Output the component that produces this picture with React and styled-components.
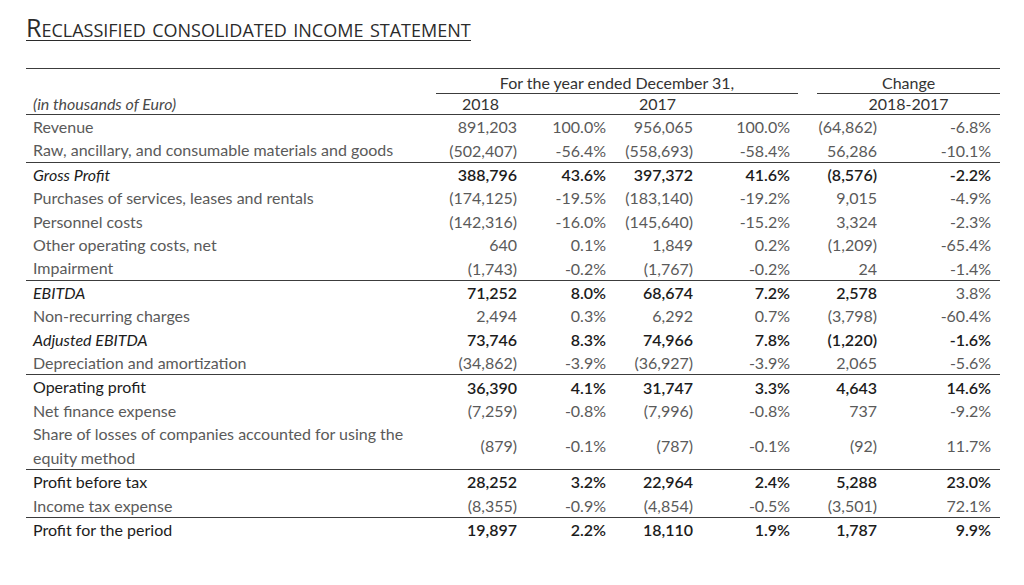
import React from "react";
import styled, { createGlobalStyle } from "styled-components";

const GlobalStyle = createGlobalStyle`
  html, body {
    margin: 0;
    padding: 0;
    background: #ffffff;
  }
  body {
    font-family: Lato, "Open Sans", "Liberation Sans", sans-serif;
    color: #595959;
  }
`;

const rows = [
  { label: "Revenue", values: ["891,203", "100.0%", "956,065", "100.0%", "(64,862)", "-6.8%"] },
  { label: "Raw, ancillary, and consumable materials and goods", values: ["(502,407)", "-56.4%", "(558,693)", "-58.4%", "56,286", "-10.1%"] },
  { label: "Gross Profit", italic: true, strong: true, ruled: true, values: ["388,796", "43.6%", "397,372", "41.6%", "(8,576)", "-2.2%"] },
  { label: "Purchases of services, leases and rentals", values: ["(174,125)", "-19.5%", "(183,140)", "-19.2%", "9,015", "-4.9%"] },
  { label: "Personnel costs", values: ["(142,316)", "-16.0%", "(145,640)", "-15.2%", "3,324", "-2.3%"] },
  { label: "Other operating costs, net", values: ["640", "0.1%", "1,849", "0.2%", "(1,209)", "-65.4%"] },
  { label: "Impairment", values: ["(1,743)", "-0.2%", "(1,767)", "-0.2%", "24", "-1.4%"] },
  { label: "EBITDA", italic: true, strong: true, ruled: true, light: [5], values: ["71,252", "8.0%", "68,674", "7.2%", "2,578", "3.8%"] },
  { label: "Non-recurring charges", values: ["2,494", "0.3%", "6,292", "0.7%", "(3,798)", "-60.4%"] },
  { label: "Adjusted EBITDA", italic: true, strong: true, values: ["73,746", "8.3%", "74,966", "7.8%", "(1,220)", "-1.6%"] },
  { label: "Depreciation and amortization", values: ["(34,862)", "-3.9%", "(36,927)", "-3.9%", "2,065", "-5.6%"] },
  { label: "Operating profit", strong: true, ruled: true, values: ["36,390", "4.1%", "31,747", "3.3%", "4,643", "14.6%"] },
  { label: "Net finance expense", values: ["(7,259)", "-0.8%", "(7,996)", "-0.8%", "737", "-9.2%"] },
  { label: "Share of losses of companies accounted for using the equity method", tall: true, values: ["(879)", "-0.1%", "(787)", "-0.1%", "(92)", "11.7%"] },
  { label: "Profit before tax", strong: true, ruled: true, values: ["28,252", "3.2%", "22,964", "2.4%", "5,288", "23.0%"] },
  { label: "Income tax expense", values: ["(8,355)", "-0.9%", "(4,854)", "-0.5%", "(3,501)", "72.1%"] },
  { label: "Profit for the period", strong: true, ruled: true, values: ["19,897", "2.2%", "18,110", "1.9%", "1,787", "9.9%"] },
];

// right padding of each value column, the gap column sits between index 3 and 4
const valuePads = [8, 7, 9, 8, 39, 9];
const rule = "1px solid #3c3c3c";

const Page = styled.div`
  padding: 14px 0 0 26px;
  width: 974px;
`;

const Title = styled.h1`
  margin: 0;
  display: inline-block;
  font-family: "Open Sans", Lato, sans-serif;
  font-weight: 400;
  font-size: 25px;
  line-height: 26px;
  font-variant: small-caps;
  color: #2b2b2b;
  border-bottom: 1px solid #2b2b2b;
`;

const Table = styled.table`
  margin-top: 27px;
  width: 974px;
  table-layout: fixed;
  border-collapse: collapse;
  border-top: ${rule};
  font-size: 16px;
`;

const HeadCell = styled.th`
  font-weight: 400;
  color: #333;
  text-align: center;
  padding: 0;
  height: ${(p) => (p.$top ? "24px" : "20px")};
  line-height: 20px;
  vertical-align: bottom;
  border-bottom: ${(p) => (p.$rule ? rule : "none")};
`;

const UnitCell = styled.th`
  font-weight: 400;
  font-style: italic;
  text-align: left;
  padding: 0 0 0 7px;
  color: #4a4a4a;
  vertical-align: bottom;
  line-height: 20px;
`;

const HeadRow = styled.tr`
  border-bottom: ${(p) => (p.$ruled ? rule : "none")};
`;

const Row = styled.tr`
  border-top: ${(p) => (p.$ruled ? rule : "none")};
  height: ${(p) => (p.$tall ? "47px" : "23.4px")};
  color: ${(p) => (p.$strong ? "#1c1c1c" : "#5a5a5a")};
`;

const Label = styled.td`
  padding: 0 0 0 7px;
  line-height: 23.4px;
  font-style: ${(p) => (p.$italic ? "italic" : "normal")};
  white-space: normal;
  vertical-align: middle;
`;

const Value = styled.td`
  padding: 0 ${(p) => p.$pad}px 0 0;
  text-align: right;
  white-space: nowrap;
  vertical-align: middle;
  font-weight: ${(p) => (p.$bold ? 600 : 400)};
  color: ${(p) => (p.$light ? "#5a5a5a" : "inherit")};
`;

const Gap = styled.td`
  padding: 0;
`;

const LabelText = styled.span`
  display: block;
  width: 375px;
`;

export default function App() {
  return (
    <>
      <GlobalStyle />
      <Page>
        <Title>Reclassified consolidated income statement</Title>
        <Table>
          <colgroup>
            <col style={{ width: 410 }} />
            <col style={{ width: 89 }} />
            <col style={{ width: 88 }} />
            <col style={{ width: 89 }} />
            <col style={{ width: 96 }} />
            <col style={{ width: 19 }} />
            <col style={{ width: 99 }} />
            <col style={{ width: 84 }} />
          </colgroup>
          <thead>
            <tr>
              <HeadCell $top />
              <HeadCell $top $rule colSpan={4}>
                For the year ended December 31,
              </HeadCell>
              <HeadCell $top />
              <HeadCell $top $rule colSpan={2}>
                Change
              </HeadCell>
            </tr>
            <HeadRow $ruled>
              <UnitCell>(in thousands of Euro)</UnitCell>
              <HeadCell>2018</HeadCell>
              <HeadCell />
              <HeadCell>2017</HeadCell>
              <HeadCell />
              <HeadCell />
              <HeadCell colSpan={2}>2018-2017</HeadCell>
            </HeadRow>
          </thead>
          <tbody>
            {rows.map((row) => (
              <Row key={row.label} $ruled={row.ruled} $strong={row.strong} $tall={row.tall}>
                <Label $italic={row.italic}>
                  {row.tall ? <LabelText>{row.label}</LabelText> : row.label}
                </Label>
                {row.values.slice(0, 4).map((v, i) => (
                  <Value key={i} $pad={valuePads[i]} $bold={row.strong}>
                    {v}
                  </Value>
                ))}
                <Gap />
                {row.values.slice(4).map((v, i) => (
                  <Value
                    key={i + 4}
                    $pad={valuePads[i + 4]}
                    $bold={row.strong && !(row.light || []).includes(i + 4)}
                    $light={(row.light || []).includes(i + 4)}
                  >
                    {v}
                  </Value>
                ))}
              </Row>
            ))}
          </tbody>
        </Table>
      </Page>
    </>
  );
}
